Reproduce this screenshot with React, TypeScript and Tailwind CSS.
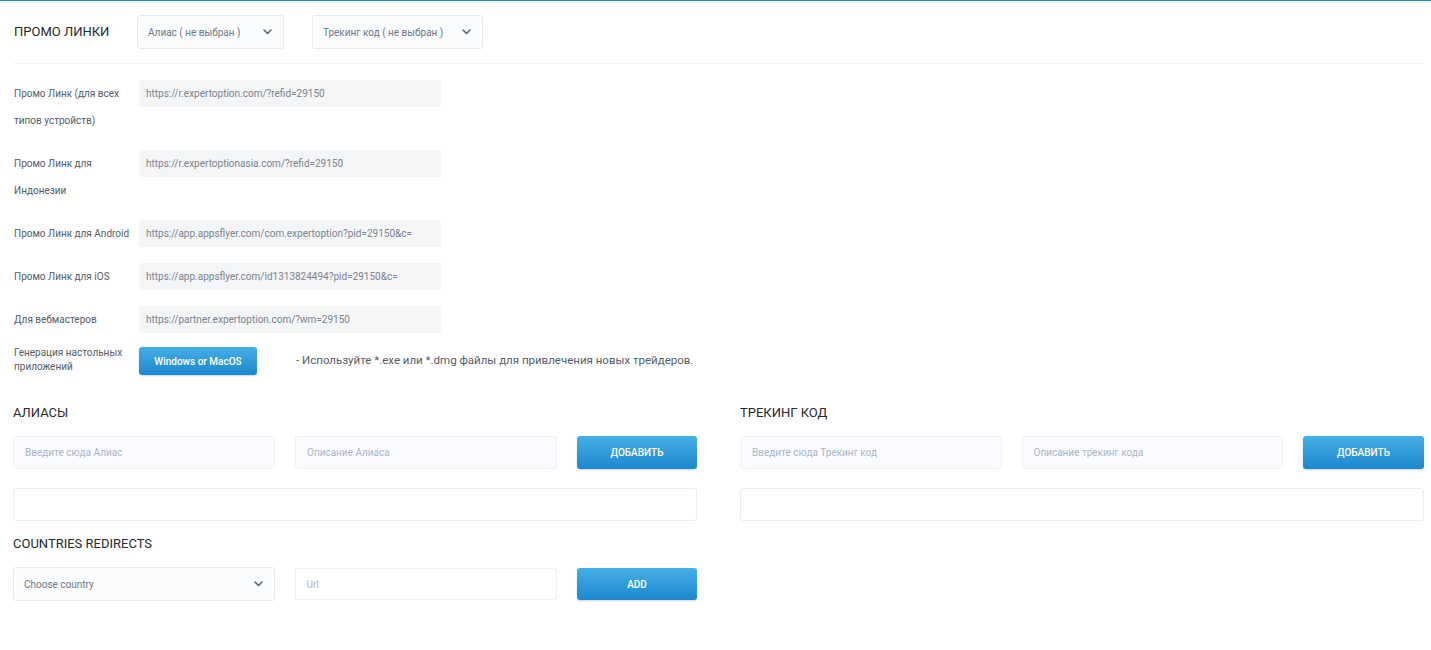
import React from "react";

function Chevron() {
  return (
    <svg width="9" height="6" viewBox="0 0 9 6" fill="none" className="shrink-0">
      <path d="M1 1l3.5 3.5L8 1" stroke="#5f6876" strokeWidth="1.6" strokeLinecap="round" strokeLinejoin="round" />
    </svg>
  );
}

function SelectBox({ label, className = "" }: { label: string; className?: string }) {
  return (
    <div
      className={`flex h-[34px] items-center justify-between rounded-[3px] border border-[#e7ebf0] bg-[#fbfcfe] pl-[10px] pr-[11px] ${className}`}
    >
      <span className="text-[10px] text-[#6f7784]">{label}</span>
      <Chevron />
    </div>
  );
}

function LinkRow({ label, value, className = "" }: { label: string; value: string; className?: string }) {
  return (
    <div className={`flex items-start ${className}`}>
      <div className="w-[125px] shrink-0 pr-[2px] text-[10px] leading-[27px] text-[#545c69]">{label}</div>
      <input
        readOnly
        value={value}
        className="h-[27px] w-[302px] rounded-[3px] bg-[#f4f5f7] px-[7px] text-[10px] text-[#7b838f] outline-none"
      />
    </div>
  );
}

function FieldInput({ placeholder, className = "" }: { placeholder: string; className?: string }) {
  return (
    <input
      placeholder={placeholder}
      className={`h-[33px] min-w-0 flex-1 rounded-[3px] border border-[#edf0f4] bg-[#f9fbfe] px-[11px] text-[10px] text-[#4b5563] outline-none placeholder:text-[#aab5c8] ${className}`}
    />
  );
}

function BlueButton({ children, className = "" }: { children: React.ReactNode; className?: string }) {
  return (
    <button
      className={`flex items-center justify-center rounded-[3px] bg-linear-to-b from-[#45afe6] to-[#1988ce] text-[10px] font-medium uppercase text-white shadow-[0_1px_2px_rgba(0,40,80,0.2)] ${className}`}
    >
      {children}
    </button>
  );
}

function SectionTitle({ children }: { children: React.ReactNode }) {
  return <h3 className="text-[13px] leading-[16px] text-[#26292e]">{children}</h3>;
}

export default function App() {
  return (
    <div className="min-h-[650px] w-full bg-white font-[Roboto,'Noto_Sans',sans-serif]">
      <div className="h-px w-full bg-[#1d8fd6]" />

      <div className="pl-[13px] pr-[7px]">
        {/* page header with filters */}
        <div className="mt-[14px] flex h-[34px] items-center">
          <h2 className="w-[124px] pl-px text-[13px] text-[#26292e]">ПРОМО ЛИНКИ</h2>
          <SelectBox label="Алиас ( не выбран )" className="w-[147px]" />
          <SelectBox label="Трекинг код ( не выбран )" className="ml-[28px] w-[171px]" />
        </div>

        <div className="mt-[14px] h-px w-full bg-[#f3f4f6]" />

        {/* promo links */}
        <div className="pl-px pt-[16px]">
          <LinkRow label="Промо Линк (для всех типов устройств)" value="https://r.expertoption.com/?refid=29150" />
          <LinkRow
            className="mt-[16px]"
            label="Промо Линк для Индонезии"
            value="https://r.expertoptionasia.com/?refid=29150"
          />
          <LinkRow
            className="mt-[16px]"
            label="Промо Линк для Android"
            value="https://app.appsflyer.com/com.expertoption?pid=29150&c="
          />
          <LinkRow
            className="mt-[16px]"
            label="Промо Линк для iOS"
            value="https://app.appsflyer.com/id1313824494?pid=29150&c="
          />
          <LinkRow
            className="mt-[16px]"
            label="Для вебмастеров"
            value="https://partner.expertoption.com/?wm=29150"
          />

          <div className="mt-[13px] flex items-center">
            <div className="w-[125px] shrink-0 pb-[2px] text-[10px] leading-[14px] text-[#545c69]">
              Генерация настольных приложений
            </div>
            <button className="h-[28px] w-[118px] rounded-[3px] bg-linear-to-b from-[#45afe6] to-[#1988ce] text-[10px] font-medium text-white shadow-[0_1px_2px_rgba(0,40,80,0.2)]">
              Windows or MacOS
            </button>
            <span className="ml-[39px] text-[11.5px] text-[#555d6a]">
              - Используйте *.exe или *.dmg файлы для привлечения новых трейдеров.
            </span>
          </div>
        </div>

        {/* aliases and tracking codes */}
        <div className="mt-[29px] grid grid-cols-2 gap-x-[43px]">
          <div className="flex flex-col">
            <SectionTitle>АЛИАСЫ</SectionTitle>
            <div className="mt-[15px] flex gap-[20px]">
              <FieldInput placeholder="Введите сюда Алиас" />
              <FieldInput placeholder="Описание Алиаса" />
              <BlueButton className="h-[33px] w-[120px]">Добавить</BlueButton>
            </div>
            <div className="mt-[19px] h-[33px] rounded-[3px] border border-[#eceef1] bg-white" />

            <div className="mt-[15px]">
              <SectionTitle>COUNTRIES REDIRECTS</SectionTitle>
            </div>
            <div className="mt-[15px] flex items-center gap-[20px]">
              <SelectBox label="Choose country" className="min-w-0 flex-1" />
              <input
                placeholder="Url"
                className="h-[32px] min-w-0 flex-1 rounded-[3px] border border-[#edf0f4] bg-white px-[11px] text-[10px] text-[#4b5563] outline-none placeholder:text-[#aab5c8]"
              />
              <BlueButton className="h-[32px] w-[120px]">Add</BlueButton>
            </div>
          </div>

          <div className="flex flex-col">
            <SectionTitle>ТРЕКИНГ КОД</SectionTitle>
            <div className="mt-[15px] flex gap-[20px]">
              <FieldInput placeholder="Введите сюда Трекинг код" />
              <FieldInput placeholder="Описание трекинг кода" />
              <BlueButton className="h-[33px] w-[121px]">Добавить</BlueButton>
            </div>
            <div className="mt-[19px] h-[33px] rounded-[3px] border border-[#eceef1] bg-white" />
          </div>
        </div>
      </div>
    </div>
  );
}
